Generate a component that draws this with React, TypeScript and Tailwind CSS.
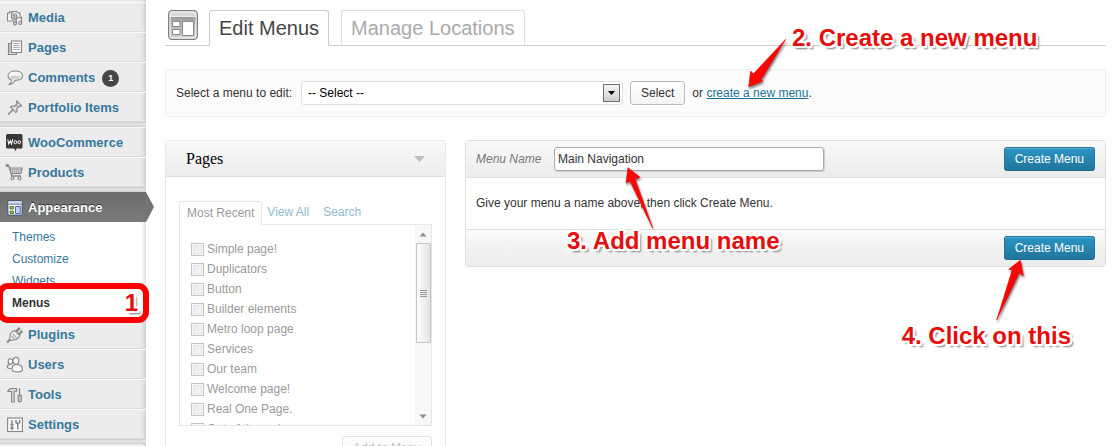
import type { ReactNode } from "react";

type IconProps = { children: ReactNode };

function Icon({ children }: IconProps) {
  return (
    <svg
      className="size-4 shrink-0 overflow-visible"
      viewBox="0 0 16 16"
      fill="none"
      stroke="#858585"
      strokeWidth="1.1"
      aria-hidden="true"
    >
      {children}
    </svg>
  );
}

const MediaIcon = (
  <Icon>
    <path d="M.5 3h2V1.700h2V3L6 1.500h3.500L11 3h2v3.500M7.500 11H.5V3" fill="#f6f6f6" />
    <circle cx="7" cy="6.500" r="2.800" fill="#fff" />
    <circle cx="7" cy="6.500" r="1.100" />
    <path d="M9.200 13V8.200l5.300-1v5.300" strokeWidth="1.300" />
    <circle cx="8" cy="13.400" r="1.500" fill="#ddd" />
    <circle cx="13.300" cy="13" r="1.500" fill="#ddd" />
  </Icon>
);

const PagesIcon = (
  <Icon>
    <path d="M4.500 3.500h-3v11h8v-2" fill="#dcdcdc" />
    <path d="M4.500 1h10v11.500h-10z" fill="#fafafa" />
    <path d="M6.300 3.500h6.400M6.300 5.500h6.400M6.300 7.500h6.400M6.300 9.500h6.400" strokeWidth="1" stroke="#aaa" />
    <path d="M2.800 5.500v7" stroke="#aaa" />
  </Icon>
);

const CommentsIcon = (
  <Icon>
    <path
      d="M8.200 1C4 1 1 3 1 5.800c0 2 1.500 3.500 3.800 4.200-.3 1.800-1.200 3.200-2.600 4.500 3-.4 5-2 6-4.200 4.200 0 7.300-1.700 7.300-4.600C15.500 2.900 12.500 1 8.200 1z"
      fill="#f6f6f6"
    />
    <path d="M3 6.300h10.500M3.500 7.500h9.500M5 8.700h6.500" stroke="#cacaca" />
  </Icon>
);

const PinIcon = (
  <Icon>
    <path d="M9.800 1l5 4.800-1.600.7-1-.4-2.400 2.700.2 2.800-1.200 1L3.500 7l1.200-1 2.800.2 2.600-2.500-.6-1z" fill="#e2e2e2" />
    <path d="M5.800 9.800L1.200 14.500" strokeWidth="1.400" />
    <path d="M8.500 7l2-2" stroke="#aaa" />
  </Icon>
);

const WooIcon = (
  <svg className="size-4 shrink-0 overflow-visible" viewBox="0 0 16 16" aria-hidden="true">
    <path d="M.5-1H14a1.500 1.500 0 011.500 1.500V12A1.500 1.500 0 0114 13.500H9.500L8.800 16 7 13.500H.5A1.500 1.500 0 01-1 12V.5A1.500 1.500 0 01.5-1z" fill="#383838" />
    <path d="M.8 4.500l.9 4.500 1.700-3.200L4.500 9l1.300-4.800" stroke="#fff" strokeWidth="1.100" fill="none" />
    <ellipse cx="8.300" cy="7.200" rx="1.300" ry="1.600" stroke="#fff" fill="none" />
    <ellipse cx="12.200" cy="7.200" rx="1.300" ry="1.600" stroke="#fff" fill="none" />
  </svg>
);

const CartIcon = (
  <Icon>
    <path d="M-.5.500h2.200L4.800 11H14" strokeWidth="1.300" />
    <path d="M2.700 3h12.500l-1.200 5.500H4.200z" fill="#e0e0e0" />
    <path d="M4.500 4.500h9.500M4.800 5.900h9M5.200 7.300h8.200" strokeDasharray="1 1" />
    <circle cx="5.500" cy="13.300" r="1.500" fill="#eee" />
    <circle cx="12.500" cy="13.300" r="1.500" fill="#eee" />
    <rect x="-1.200" y="-.7" width="2.700" height="2.700" fill="#858585" stroke="none" />
  </Icon>
);

const AppearanceIcon = (
  <svg className="size-4 shrink-0" viewBox="0 0 16 16" aria-hidden="true">
    <rect x=".9" y=".9" width="14.200" height="14.200" rx="1" fill="#fff" stroke="#3b4d7a" />
    <path d="M1.400 1.400h13.200v2.600H1.400z" fill="#d6dff0" />
    <path d="M1.400 4.200h13.200" stroke="#3b4d7a" strokeWidth=".8" />
    <path d="M3 6.500h3.500v2.500H3zM3 11h3.500v2.500H3z" fill="#8fbb52" stroke="#4f7a25" strokeWidth=".9" />
    <path d="M8.500 6.500h4.800v7H8.500z" fill="#c3cff2" stroke="#3f55a5" strokeWidth=".9" />
  </svg>
);

const PluginsIcon = (
  <Icon>
    <path d="M0 15.500l3-3" strokeWidth="1.800" />
    <path d="M7.500 3.500l5.200 5.200c-1.800 3.200-4.200 4.600-7.200 4.300l-1.500.7-1.700-1.700.8-1.500c-.5-3 .9-5.600 4.400-7z" fill="#f2f2f2" />
    <path d="M8.500 4.500L12 .8l.9.900-3.500 3.700M11 7.500l3.400-3.600.9.900-3.500 3.600" fill="#fff" />
    <path d="M4.500 9l3 3M6 7l3.500 3.500" stroke="#aaa" />
  </Icon>
);

const UsersIcon = (
  <Icon>
    <ellipse cx="3.500" cy="4.500" rx="2.300" ry="2.700" fill="#fafafa" />
    <path d="M4 7.300C1.500 7.300.3 8.600.3 10c0 1 1.400 1.600 4 1.600" fill="#eee" />
    <ellipse cx="9" cy="3.800" rx="2.900" ry="3.500" fill="#fafafa" />
    <path d="M5 12c0-2.800 2-4.500 4.700-4.500 3 0 5.800 2 5.800 4.500 0 1.800-2 3-5.200 3S5 13.800 5 12z" fill="#fafafa" />
  </Icon>
);

const ToolsIcon = (
  <Icon>
    <path d="M.7 4.500C1.500 2 3 1.500 5 1.500h4.500v2.700H7.200V15H4.600V4.500H3z" fill="#dedede" />
    <path d="M12.500 8V1.500M11.200 8.500h3v5.300c0 1.400-3 1.400-3 0z" fill="#eee" strokeWidth="1.300" />
    <path d="M12.700 9.500v4" stroke="#bbb" />
  </Icon>
);

const SettingsIcon = (
  <Icon>
    <rect x=".6" y="1" width="14.800" height="13.500" fill="#fafafa" />
    <path d="M5 3v4M3.300 7.500h3.400M5 8v4.500" strokeWidth="1.300" />
    <path d="M3.500 9.500h3v3h-3z" fill="#888" stroke="none" />
    <path d="M9 3v2.500l1.800 1.300L12.600 5.500V3M10.800 7v5.500" strokeWidth="1.500" />
  </Icon>
);

type ItemProps = { icon: ReactNode; label: string; count?: number };

function MenuItem({ icon, label, count }: ItemProps) {
  return (
    <li className="h-[30px] border-t border-b border-t-[#f9f9f9] border-b-[#dcdcdc]">
      <a href="#" className="flex h-full items-center gap-[5px] pt-[2px] pl-[7px] text-[13px] font-bold text-[#37789c]">
        {icon}
        <span>{label}</span>
        {count !== undefined && (
          <span className="ml-[2px] flex size-[17px] items-center justify-center rounded-full bg-[#464646] text-[9px] leading-none text-white">
            {count}
          </span>
        )}
      </a>
    </li>
  );
}

function Separator() {
  return <li className="h-[5px] border-y border-y-[#d0d0d0] bg-[#dfdfdf]" aria-hidden="true" />;
}

type CalloutProps = { className: string; children: ReactNode };

function Callout({ className, children }: CalloutProps) {
  return (
    <span
      className={`pointer-events-none absolute z-20 text-2xl leading-7 font-bold whitespace-nowrap text-[#e60d0d] [text-shadow:2px_0_0_#fff,-2px_0_0_#fff,0_2px_0_#fff,0_-2px_0_#fff,2px_2px_0_#fff,-2px_2px_0_#fff,2px_-2px_0_#fff,-2px_-2px_0_#fff,3px_3px_2px_#777] ${className}`}
    >
      {children}
    </span>
  );
}

type ArrowProps = { className: string; viewBox: string; points: string };

function Arrow({ className, viewBox, points }: ArrowProps) {
  return (
    <svg
      className={`pointer-events-none absolute z-10 overflow-visible drop-shadow-[1px_2px_1px_rgba(0,0,0,0.5)] ${className}`}
      viewBox={viewBox}
      aria-hidden="true"
    >
      <polygon points={points} fill="#fb0505" stroke="#e00" strokeWidth=".6" />
    </svg>
  );
}

function CreateButton() {
  return (
    <button
      type="button"
      className="h-6 rounded-[3px] border border-[#21759b] border-b-[#1e6a8d] bg-linear-to-b from-[#2a95c5] to-[#21759b] px-[10px] text-xs leading-none text-white shadow-[inset_0_1px_0_rgba(120,200,230,0.5)]"
    >
      Create Menu
    </button>
  );
}

const pages = [
  "Simple page!",
  "Duplicators",
  "Button",
  "Builder elements",
  "Metro loop page",
  "Services",
  "Our team",
  "Welcome page!",
  "Real One Page.",
  "Out of the red",
];

function Sidebar() {
  return (
    <nav className="w-[146px] shrink-0 bg-[#ececec] pt-[2px] shadow-[inset_-5px_0_5px_-4px_#bdbdbd]">
      <ul>
        <MenuItem icon={MediaIcon} label="Media" />
        <MenuItem icon={PagesIcon} label="Pages" />
        <MenuItem icon={CommentsIcon} label="Comments" count={1} />
        <MenuItem icon={PinIcon} label="Portfolio Items" />
        <Separator />
        <MenuItem icon={WooIcon} label="WooCommerce" />
        <MenuItem icon={CartIcon} label="Products" />
        <Separator />
        <li>
          <a
            href="#"
            className="relative flex h-[30px] items-center gap-[5px] bg-linear-to-b from-[#6d6d6d] to-[#7a7a7a] pt-[2px] pl-[7px] text-[13px] font-bold text-white [text-shadow:0_-1px_0_#333]"
          >
            {AppearanceIcon}
            Appearance
            <svg className="absolute top-0 left-full h-[30px] w-2" viewBox="0 0 8 30" aria-hidden="true">
              <path d="M0 0l8 15-8 15z" fill="#747474" />
            </svg>
          </a>
          <ul className="bg-white pt-1 pb-[5px] text-xs leading-[22px] text-[#37789c] shadow-[inset_-5px_0_5px_-4px_#cdcdcd]">
            <li className="pl-3"><a href="#">Themes</a></li>
            <li className="pl-3"><a href="#">Customize</a></li>
            <li className="pl-3"><a href="#">Widgets</a></li>
            <li className="relative pl-3 font-bold text-[#333]">
              <a href="#">Menus</a>
              <span className="pointer-events-none absolute -top-[9px] -right-[3px] -left-[3px] z-10 h-10 rounded-[11px] border-[6px] border-[#fb0000]" />
              <Callout className="-top-[3px] right-[8px]">1</Callout>
            </li>
          </ul>
        </li>
        <MenuItem icon={PluginsIcon} label="Plugins" />
        <MenuItem icon={UsersIcon} label="Users" />
        <MenuItem icon={ToolsIcon} label="Tools" />
        <MenuItem icon={SettingsIcon} label="Settings" />
        <Separator />
      </ul>
    </nav>
  );
}

function Header() {
  return (
    <header className="flex h-9 items-end border-b border-[#ccc] pl-[3px]">
      <svg className="mb-[5px] size-[30px]" viewBox="0 0 30 30" aria-hidden="true">
        <defs>
          <linearGradient id="frame" x1="0" y1="0" x2="0" y2="1">
            <stop offset="0" stopColor="#999" />
            <stop offset=".35" stopColor="#b4b4b4" />
            <stop offset="1" stopColor="#d0d0d0" />
          </linearGradient>
        </defs>
        <rect x=".7" y=".7" width="28.600" height="28.600" rx="3.500" fill="#fff" stroke="#7c7c7c" strokeWidth="1.300" />
        <path d="M2.500 2.500h25v4h-25z" fill="#d9d9d9" />
        <path d="M2.500 7h25v20.500h-25z" fill="url(#frame)" />
        <path d="M4.500 11.500h7.500v5H4.500zM4.500 19.500h7.500v5H4.500zM14.500 11.500h11v14h-11z" fill="#fff" stroke="#8a8a8a" />
      </svg>
      <h1 className="-mb-px ml-[11px] flex gap-3 text-xl leading-[34px]">
        <a href="#" className="h-9 rounded-t-[3px] border border-[#ccc] border-b-white bg-white px-[9px] text-[#464646]">
          Edit Menus
        </a>
        <a href="#" className="h-9 rounded-t-[3px] border border-[#dfdfdf] border-b-[#ccc] px-[9px] text-[#aaa]">
          Manage Locations
        </a>
      </h1>
    </header>
  );
}

function MenuPicker() {
  return (
    <form className="relative mt-[23px] flex h-12 items-center rounded-[3px] border border-[#eee] bg-[#fbfbfb] pl-[10px]">
      <label htmlFor="menu" className="w-[125px]">Select a menu to edit:</label>
      <span className="relative">
        <select
          id="menu"
          className="block h-6 w-[322px] appearance-none rounded-[3px] border border-[#dfdfdf] bg-white px-[6px] text-black"
        >
          <option>-- Select --</option>
        </select>
        <span className="pointer-events-none absolute top-[3px] right-[3px] flex h-[18px] w-[17px] items-center justify-center border border-[#707070] bg-linear-to-b from-[#f4f4f4] to-[#cfcfcf]">
          <svg className="h-1 w-[7px]" viewBox="0 0 7 4" aria-hidden="true">
            <path d="M0 0h7L3.500 4z" fill="#000" />
          </svg>
        </span>
      </span>
      <button
        type="button"
        className="ml-[7px] h-6 rounded-[3px] border border-[#bbb] bg-linear-to-b from-[#fefefe] to-[#f4f4f4] px-[10px] leading-none"
      >
        Select
      </button>
      <span className="ml-[7px]">
        or <a href="#" className="text-[#21759b] underline">create a new menu</a>.
      </span>
      <Arrow
        className="top-[-32px] left-[582px] h-[50px] w-10"
        viewBox="748 37 40 50"
        points="748.700,85.700 750.700,70 753.300,73 785.700,38.300 760.700,79.300 763,80"
      />
      <Callout className="top-[-46px] left-[626px]">2. Create a new menu</Callout>
    </form>
  );
}

function PagesPanel() {
  return (
    <section className="w-[281px] shrink-0 rounded-t-[3px] border border-[#e8e8e8]">
      <h2 className="flex h-9 items-center justify-between border-b border-[#dfdfdf] bg-linear-to-b from-[#f9f9f9] to-[#ececec] pr-5 pl-5 font-['Liberation_Serif',serif] text-base text-black">
        Pages
        <svg className="h-[6px] w-[11px]" viewBox="0 0 11 6" aria-hidden="true">
          <path d="M0 0h11L5.500 6z" fill="#bfbfbf" />
        </svg>
      </h2>
      <div className="px-[13px] pt-6 text-[#9a9a9a]">
        <ul className="flex">
          <li className="relative -mb-px h-6 rounded-t-[3px] border border-[#e6e6e6] border-b-white bg-white px-[7px] leading-[22px]">
            <a href="#">Most Recent</a>
          </li>
          <li className="px-[5px] leading-[23px]"><a href="#" className="text-[#8fbacd]">View All</a></li>
          <li className="px-[9px] leading-[23px]"><a href="#" className="text-[#8fbacd]">Search</a></li>
        </ul>
        <div className="flex h-[202px] border border-[#e6e6e6]">
          <ul className="grow overflow-hidden pt-[14px] pl-[11px]">
            {pages.map((page) => (
              <li key={page} className="h-5">
                <label className="flex h-5 items-center gap-[3px]">
                  <input
                    type="checkbox"
                    className="size-[13px] appearance-none border border-[#c4c4c4] bg-linear-to-br from-[#e4e4e4] to-[#fbfbfb] shadow-[inset_0_0_0_1px_#f8f8f8,inset_0_0_0_2px_#e6e6e6]"
                  />
                  {page}
                </label>
              </li>
            ))}
          </ul>
          <div className="flex w-4 flex-col items-center bg-[#f7f7f7]" aria-hidden="true">
            <svg className="h-[18px] w-4 shrink-0" viewBox="0 0 16 18">
              <path d="M4.500 11.500h7L8 7.500z" fill="#8d8d8d" />
            </svg>
            <div className="flex h-[100px] w-[15px] shrink-0 flex-col items-center justify-center gap-px rounded-[1px] border border-[#c4c4c4] bg-linear-to-r from-[#fdfdfd] to-[#e4e4e4]">
              <i className="h-px w-[7px] bg-[#999]" />
              <i className="h-px w-[7px] bg-[#999]" />
              <i className="h-px w-[7px] bg-[#999]" />
              <i className="h-px w-[7px] bg-[#999]" />
            </div>
            <svg className="mt-auto h-[18px] w-4 shrink-0" viewBox="0 0 16 18">
              <path d="M4.500 7.500h7L8 11.500z" fill="#8d8d8d" />
            </svg>
          </div>
        </div>
        <div className="flex justify-end py-[10px]">
          <button
            type="button"
            className="h-6 rounded-[3px] border border-[#e2e2e2] bg-[#fcfcfc] px-[10px] leading-none text-[#c0c0c0]"
          >
            Add to Menu
          </button>
        </div>
      </div>
    </section>
  );
}

function MenuEditor() {
  return (
    <section className="relative grow self-start rounded-[3px] border border-[#dfdfdf] bg-white">
      <div className="flex h-[37px] items-center border-b border-[#dfdfdf] bg-linear-to-b from-[#f9f9f9] to-[#ececec] pr-[10px] pl-[10px]">
        <label htmlFor="menu-name" className="w-[78px] text-[#777] italic">Menu Name</label>
        <input
          id="menu-name"
          type="text"
          defaultValue="Main Navigation"
          className="h-6 w-[270px] rounded-[3px] border border-[#aaa] bg-white px-[3px] shadow-[1px_1px_1px_#ccc]"
        />
        <span className="ml-auto flex">
          <CreateButton />
        </span>
      </div>
      <p className="px-[10px] py-[17px] leading-[17px]">Give your menu a name above, then click Create Menu.</p>
      <div className="relative flex h-[37px] items-center justify-end border-t border-[#dfdfdf] bg-linear-to-b from-[#f9f9f9] to-[#ececec] pr-[10px]">
        <CreateButton />
        <Arrow
          className="top-[29px] right-[81px] h-[62px] w-7"
          viewBox="996 258 28 62"
          points="1020.300,259.300 1008.700,268.300 1012.300,268.700 996.700,319 1019.300,271.700 1023.300,274.700"
        />
        <Callout className="top-[92px] right-[34px]">4. Click on this</Callout>
      </div>
      <Arrow
        className="top-[26px] left-[160px] h-[62px] w-7"
        viewBox="626 167 28 62"
        points="628,167.700 626,183 630,181 652.700,228 635,179 640,177.300"
      />
      <Callout className="top-[86px] left-[101px]">3. Add menu name</Callout>
    </section>
  );
}

export default function App() {
  return (
    <div className="flex h-screen overflow-hidden bg-white font-['Liberation_Sans',Arial,sans-serif] text-xs text-[#333]">
      <Sidebar />
      <main className="min-w-0 grow pt-[10px] pr-[7px] pl-[19px]">
        <Header />
        <MenuPicker />
        <div className="mt-[23px] flex items-start gap-[19px]">
          <PagesPanel />
          <MenuEditor />
        </div>
      </main>
    </div>
  );
}
